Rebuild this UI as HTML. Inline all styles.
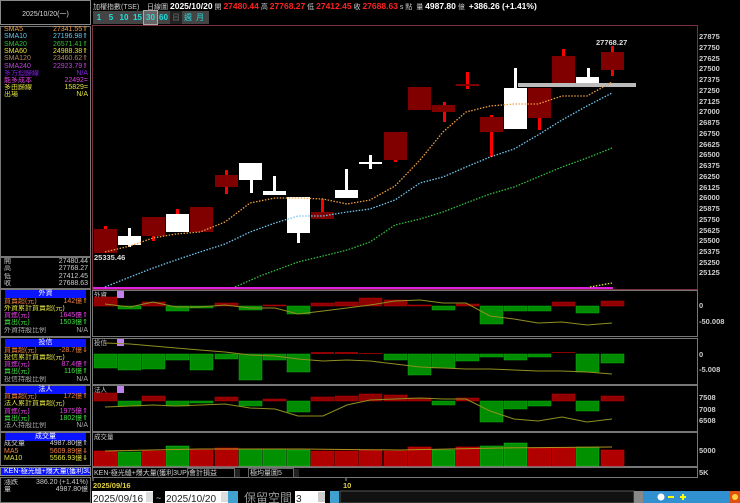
<!DOCTYPE html>
<html><head><meta charset="utf-8"><style>
*{margin:0;padding:0;box-sizing:border-box}
body{width:740px;height:503px;background:#000;overflow:hidden;position:relative;font-family:"Liberation Sans","Noto Sans CJK TC",sans-serif;}
.a{position:absolute}
.lp{position:absolute;left:0;width:91px;border:1px solid #777;}
.r{position:absolute;left:4px;width:84px;height:8px;font-size:7px;line-height:8px;white-space:nowrap;overflow:hidden}
.r b{float:right;font-weight:normal}
.hd{position:absolute;left:5px;width:81px;height:8px;background:#0a14ff;color:#fff;font-size:7px;line-height:8px;text-align:center}
</style></head><body>
<div class="lp" style="top:0;height:25px;border-color:#888"></div>
<div class="a" style="left:0;top:9px;width:91px;text-align:center;color:#ddd;font-size:7px">2025/10/20(一)</div>
<div class="lp" style="top:26px;height:231px"></div>
<div class="r" style="top:26px;color:#f0a040">SMA5<b>27341.55⇑</b></div>
<div class="r" style="top:33px;color:#60c8f0">SMA10<b>27196.98⇑</b></div>
<div class="r" style="top:41px;color:#30c030">SMA20<b>26571.41⇑</b></div>
<div class="r" style="top:48px;color:#e8e040">SMA60<b>24988.38⇑</b></div>
<div class="r" style="top:55px;color:#b08860">SMA120<b>23460.62⇑</b></div>
<div class="r" style="top:63px;color:#c040e0">SMA240<b>22923.79⇑</b></div>
<div class="r" style="top:70px;color:#8020e0">多方迴歸線<b>N/A</b></div>
<div class="r" style="top:77px;color:#e040e0">能多成本<b>22492=</b></div>
<div class="r" style="top:84px;color:#e0e040">多由歸線<b>15829=</b></div>
<div class="r" style="top:91px;color:#e0e040">出場<b>N/A</b></div>
<div class="lp" style="top:257px;height:32px"></div>
<div class="r" style="top:258px;color:#ccc">開<b>27480.44</b></div>
<div class="r" style="top:265px;color:#ccc">高<b>27768.27</b></div>
<div class="r" style="top:273px;color:#ccc">低<b>27412.45</b></div>
<div class="r" style="top:280px;color:#ccc">收<b>27688.63</b></div>
<div class="lp" style="top:289px;height:48px"></div>
<div class="hd" style="top:290px">外資</div>
<div class="r" style="top:298px;color:#f08040">買賣超(元)<b>142億⇑</b></div>
<div class="r" style="top:305px;color:#e0e040">外資累計買賣超(元)<b>14143億⇑</b></div>
<div class="r" style="top:312px;color:#e040e0">買進(元)<b>1645億⇑</b></div>
<div class="r" style="top:319px;color:#40e040">賣出(元)<b>1503億⇑</b></div>
<div class="r" style="top:327px;color:#aaa">外資持股比例<b>N/A</b></div>
<div class="lp" style="top:337px;height:48px"></div>
<div class="hd" style="top:339px">投信</div>
<div class="r" style="top:347px;color:#f08040">買賣超(元)<b>-28.7億⇓</b></div>
<div class="r" style="top:354px;color:#e0e040">投信累計買賣超(元)<b>12550億⇑</b></div>
<div class="r" style="top:361px;color:#e040e0">買進(元)<b>87.4億⇑</b></div>
<div class="r" style="top:368px;color:#40e040">賣出(元)<b>116億⇑</b></div>
<div class="r" style="top:376px;color:#aaa">投信持股比例<b>N/A</b></div>
<div class="lp" style="top:385px;height:47px"></div>
<div class="hd" style="top:386px">法人</div>
<div class="r" style="top:393px;color:#f08040">買賣超(元)<b>172億⇑</b></div>
<div class="r" style="top:400px;color:#e0e040">法人累計買賣超(元)<b>6538億⇑</b></div>
<div class="r" style="top:408px;color:#e040e0">買進(元)<b>1975億⇑</b></div>
<div class="r" style="top:415px;color:#40e040">賣出(元)<b>1802億⇑</b></div>
<div class="r" style="top:422px;color:#aaa">法人持股比例<b>N/A</b></div>
<div class="lp" style="top:432px;height:34px"></div>
<div class="hd" style="top:433px">成交量</div>
<div class="r" style="top:440px;color:#ccc">成交量<b>4987.80億⇑</b></div>
<div class="r" style="top:448px;color:#f08040">MA5<b>5609.89億⇓</b></div>
<div class="r" style="top:455px;color:#e0e040">MA10<b>5566.93億⇓</b></div>
<div class="a" style="left:0;top:467px;width:91px;height:9px;background:#0a14ff;border:1px solid #888;color:#fff;font-size:7px;line-height:8px;padding-left:3px;white-space:nowrap;overflow:hidden">KEN-極光縫+爆大量(獲利3UP)</div>
<div class="lp" style="top:477px;height:26px"></div>
<div class="r" style="top:479px;color:#ccc">漲跌<b>386.20 (+1.41%)</b></div>
<div class="r" style="top:486px;color:#ccc">量<b>4987.80億</b></div>

<div class="a" style="left:93px;top:1px;font-size:7px;color:#ccc;white-space:nowrap">加權指數(TSE)&nbsp;&nbsp;&nbsp;&nbsp;日線圖 <span style="font-size:8.5px;font-weight:bold;color:#fff">2025/10/20</span> 開 <b style="color:#f22;font-size:8.5px">27480.44</b> 高 <b style="color:#f22;font-size:8.5px">27768.27</b> 低 <b style="color:#f22;font-size:8.5px">27412.45</b> 收 <b style="color:#f22;font-size:8.5px">27688.63</b> s 點 &nbsp;量 <b style="color:#fff;font-size:8.5px">4987.80</b> 億 &nbsp;<b style="color:#fff;font-size:8.5px">+386.26 (+1.41%)</b></div>
<div class="a" style="left:93px;top:11px;width:116px;height:13px;background:#444"></div>
<div class="a" style="left:93px;top:11px;font-size:8px;font-weight:bold;color:#2dd;line-height:13px;white-space:nowrap">
<span style="display:inline-block;width:12px;text-align:center">1</span><span style="display:inline-block;width:12px;text-align:center">5</span><span style="display:inline-block;width:14px;text-align:center">10</span><span style="display:inline-block;width:13px;text-align:center">15</span><span style="display:inline-block;width:13px;text-align:center;background:#666;outline:1px solid #aaa">30</span><span style="display:inline-block;width:13px;text-align:center">60</span><span style="display:inline-block;width:12px;text-align:center;background:#222;color:#555">日</span><span style="display:inline-block;width:12px;text-align:center;font-weight:normal">週</span><span style="display:inline-block;width:12px;text-align:center;font-weight:normal">月</span></div>

<svg class="a" style="left:0;top:0" width="740" height="503">
<g fill="none">
<rect x="92.5" y="25.5" width="605" height="264" stroke="#7a3040"/>
<rect x="92.5" y="290.5" width="605" height="46" stroke="#777"/>
<rect x="92.5" y="338.5" width="605" height="46" stroke="#777"/>
<rect x="92.5" y="385.5" width="605" height="46" stroke="#777"/>
<rect x="92.5" y="432.5" width="605" height="34" stroke="#777"/>
<rect x="92.5" y="467.5" width="605" height="10" stroke="#777"/>
</g>
<line x1="93" y1="288" x2="613" y2="288" stroke="#e020e0" stroke-width="2"/>
<g fill="#ff0000">
<rect x="104" y="226" width="3" height="4"/><rect x="176" y="209" width="3" height="6"/>
<rect x="152" y="235" width="3" height="6"/><rect x="225" y="170" width="3" height="24"/>
<rect x="321" y="199" width="3" height="14"/><rect x="394" y="160" width="3" height="2"/>
<rect x="443" y="102" width="3" height="20"/><rect x="466" y="72" width="3" height="17"/>
<rect x="490" y="115" width="3" height="42"/><rect x="538" y="110" width="3" height="20"/>
<rect x="562" y="49" width="3" height="8"/><rect x="611" y="46" width="3" height="30"/>
</g>
<g fill="#fff">
<rect x="128" y="228" width="3" height="19"/><rect x="250" y="175" width="3" height="18"/>
<rect x="273" y="176" width="3" height="19"/><rect x="297" y="225" width="3" height="18"/>
<rect x="345" y="169" width="3" height="22"/><rect x="369" y="155" width="3" height="14"/>
<rect x="514" y="68" width="3" height="22"/><rect x="587" y="68" width="3" height="10"/>
<rect x="118" y="236" width="23" height="9"/><rect x="166" y="214" width="23" height="18"/>
<rect x="239" y="163" width="23" height="17"/><rect x="263" y="191" width="23" height="4"/>
<rect x="287" y="197" width="23" height="36"/><rect x="335" y="190" width="23" height="8"/>
<rect x="359" y="162" width="23" height="2"/><rect x="504" y="88" width="23" height="41"/>
<rect x="576" y="77" width="23" height="9"/>
</g>
<g fill="#800000">
<rect x="94" y="229" width="23" height="24"/><rect x="142" y="217" width="23" height="19"/>
<rect x="190" y="207" width="23" height="25"/><rect x="215" y="175" width="23" height="12"/>
<rect x="311" y="212" width="23" height="7"/><rect x="384" y="132" width="23" height="28"/>
<rect x="408" y="87" width="23" height="23"/><rect x="432" y="105" width="23" height="7"/>
<rect x="456" y="84" width="23" height="2"/><rect x="480" y="117" width="23" height="15"/>
<rect x="528" y="88" width="23" height="30"/><rect x="552" y="56" width="23" height="27"/>
<rect x="601" y="52" width="23" height="18"/>
</g>
<rect x="518" y="83" width="118" height="4" fill="#bbb"/>
<g fill="none" stroke-width="1.3" stroke-dasharray="1.5 1.5">
<polyline stroke="#f0a040" points="105,252 130,246 153,238 176,234 200,232 225,222 250,203 275,198 298,198 323,199 347,204 370,200 395,186 420,160 443,132 466,112 490,106 514,104 538,104 562,96 587,96 612,82"/>
<polyline stroke="#70c8f0" points="105,287 130,277 153,268 176,260 200,252 225,244 250,232 275,223 298,216 323,216 347,212 370,209 395,200 420,183 443,177 466,167 490,157 514,149 538,135 562,120 587,106 612,93"/>
<polyline stroke="#30c040" points="235,287 260,276 298,262 323,256 347,250 370,242 395,225 420,219 443,212 466,203 490,194 514,187 538,177 562,167 587,158 612,148"/>
<polyline stroke="#e0e040" points="590,287 612,283"/>
</g>
<g font-size="7.5" font-family="Liberation Sans" font-weight="bold" fill="#ddd">
<text x="596" y="45">27768.27</text><text x="94" y="260">25335.46</text>
</g>
<g font-size="7.5" font-family="Liberation Sans" font-weight="bold" fill="#ccc">
<text x="699" y="39">27875</text><text x="699" y="50">27750</text><text x="699" y="61">27625</text><text x="699" y="71">27500</text><text x="699" y="82">27375</text><text x="699" y="93">27250</text><text x="699" y="104">27125</text><text x="699" y="114">27000</text><text x="699" y="125">26875</text><text x="699" y="136">26750</text><text x="699" y="147">26625</text><text x="699" y="157">26500</text><text x="699" y="168">26375</text><text x="699" y="179">26250</text><text x="699" y="190">26125</text><text x="699" y="200">26000</text><text x="699" y="211">25875</text><text x="699" y="222">25750</text><text x="699" y="233">25625</text><text x="699" y="243">25500</text><text x="699" y="254">25375</text><text x="699" y="265">25250</text><text x="699" y="275">25125</text>
<text x="699" y="308">0</text><text x="699" y="324">-50.008</text>
<text x="699" y="357">0</text><text x="699" y="372">-5.008</text>
<text x="699" y="400">7508</text><text x="699" y="412">7008</text><text x="699" y="423">6508</text>
<text x="699" y="453">5000</text><text x="699" y="475">5K</text>
</g>
<g font-size="6.5" fill="#ccc"><text x="94" y="297">外資</text><text x="94" y="345">投信</text><text x="94" y="392">法人</text><text x="94" y="439">成交量</text></g>
<g fill="#c080f0"><rect x="117" y="291" width="7" height="7"/><rect x="117" y="339" width="7" height="7"/><rect x="117" y="386" width="7" height="7"/></g>
<g fill="#900000" stroke="#c00000" stroke-width=".5">
<rect x="94" y="297" width="23" height="9"/><rect x="142" y="302" width="23" height="4"/><rect x="215" y="303" width="23" height="3"/><rect x="263" y="305" width="23" height="1"/><rect x="311" y="303" width="23" height="3"/><rect x="335" y="302" width="23" height="4"/><rect x="359" y="298" width="23" height="8"/><rect x="384" y="300" width="23" height="6"/><rect x="408" y="305" width="23" height="1"/><rect x="456" y="304" width="23" height="2"/><rect x="552" y="302" width="23" height="4"/><rect x="601" y="301" width="23" height="5"/>
</g>
<g fill="#008c00" stroke="#10b010" stroke-width=".5">
<rect x="118" y="306" width="23" height="3"/><rect x="166" y="306" width="23" height="5"/><rect x="190" y="306" width="23" height="2"/><rect x="239" y="306" width="23" height="4"/><rect x="287" y="306" width="23" height="8"/><rect x="432" y="306" width="23" height="4"/><rect x="480" y="306" width="23" height="18"/><rect x="504" y="306" width="23" height="5"/><rect x="528" y="306" width="23" height="5"/><rect x="576" y="306" width="23" height="7"/>
</g>
<polyline fill="none" stroke="#909020" points="105,304 130,307 153,302 176,307 200,307 225,305 250,308 275,308 298,314 323,311 347,308 370,305 395,301 420,300 443,303 466,303 490,316 514,319 538,323 562,322 587,325 612,323"/>
<g fill="#008c00" stroke="#10b010" stroke-width=".5">
<rect x="94" y="354" width="23" height="14"/><rect x="118" y="354" width="23" height="16"/><rect x="142" y="354" width="23" height="15"/><rect x="166" y="354" width="23" height="6"/><rect x="190" y="354" width="23" height="16"/><rect x="215" y="354" width="23" height="5"/><rect x="239" y="354" width="23" height="26"/><rect x="263" y="354" width="23" height="6"/><rect x="287" y="354" width="23" height="18"/><rect x="384" y="354" width="23" height="6"/><rect x="408" y="354" width="23" height="21"/><rect x="432" y="354" width="23" height="14"/><rect x="456" y="354" width="23" height="7"/><rect x="480" y="354" width="23" height="3"/><rect x="504" y="354" width="23" height="6"/><rect x="528" y="354" width="23" height="3"/><rect x="576" y="354" width="23" height="18"/><rect x="601" y="354" width="23" height="9"/>
</g>
<g fill="#900000"><rect x="311" y="352" width="23" height="2"/><rect x="335" y="352" width="23" height="2"/><rect x="359" y="353" width="23" height="1"/><rect x="552" y="352" width="23" height="1"/></g>
<polyline fill="none" stroke="#909020" points="105,343 130,344 153,346 176,348 200,350 225,352 250,355 275,356 298,359 323,361 347,360 370,361 395,364 420,367 443,368 466,369 490,369 514,370 538,371 562,371 587,372 612,374"/>
<g fill="#900000" stroke="#c00000" stroke-width=".5">
<rect x="94" y="393" width="23" height="8"/><rect x="142" y="396" width="23" height="5"/><rect x="215" y="397" width="23" height="4"/><rect x="263" y="399" width="23" height="2"/><rect x="311" y="397" width="23" height="4"/><rect x="335" y="396" width="23" height="5"/><rect x="359" y="394" width="23" height="7"/><rect x="384" y="395" width="23" height="6"/><rect x="408" y="398" width="23" height="3"/><rect x="456" y="398" width="23" height="3"/><rect x="552" y="394" width="23" height="7"/><rect x="601" y="396" width="23" height="5"/>
</g>
<g fill="#008c00" stroke="#10b010" stroke-width=".5">
<rect x="118" y="401" width="23" height="5"/><rect x="166" y="401" width="23" height="5"/><rect x="190" y="401" width="23" height="2"/><rect x="239" y="401" width="23" height="5"/><rect x="287" y="401" width="23" height="11"/><rect x="432" y="401" width="23" height="4"/><rect x="480" y="401" width="23" height="21"/><rect x="504" y="401" width="23" height="8"/><rect x="528" y="401" width="23" height="5"/><rect x="576" y="401" width="23" height="10"/>
</g>
<polyline fill="none" stroke="#909020" points="105,407 130,406 153,405 176,406 200,405 225,404 250,408 275,409 298,416 323,416 347,405 370,400 395,399 420,398 443,399 466,399 490,411 514,419 538,421 562,417 587,422 612,419"/>
<g fill="#b00000" stroke="#e00000" stroke-width=".5">
<rect x="94" y="451" width="23" height="15"/><rect x="142" y="451" width="23" height="15"/><rect x="190" y="450" width="23" height="16"/><rect x="215" y="448" width="23" height="18"/><rect x="311" y="451" width="23" height="15"/><rect x="335" y="451" width="23" height="15"/><rect x="359" y="450" width="23" height="16"/><rect x="384" y="451" width="23" height="15"/><rect x="408" y="447" width="23" height="19"/><rect x="456" y="447" width="23" height="19"/><rect x="528" y="448" width="23" height="18"/><rect x="552" y="448" width="23" height="18"/><rect x="601" y="450" width="23" height="16"/>
</g>
<g fill="#009000" stroke="#20c020" stroke-width=".5">
<rect x="118" y="452" width="23" height="14"/><rect x="166" y="446" width="23" height="20"/><rect x="239" y="449" width="23" height="17"/><rect x="263" y="449" width="23" height="17"/><rect x="287" y="450" width="23" height="16"/><rect x="432" y="450" width="23" height="16"/><rect x="480" y="446" width="23" height="20"/><rect x="504" y="443" width="23" height="23"/><rect x="576" y="447" width="23" height="19"/>
</g>
<polyline fill="none" stroke="#b09020" points="105,451 200,449 300,449 400,450 500,448 612,447"/>
<g font-size="7" fill="#ccc"><text x="94" y="475">KEN-極光縫+爆大量(獲利3UP)</text></g>
<rect x="187.5" y="468.5" width="47" height="9" fill="none" stroke="#666"/><rect x="235" y="469" width="5" height="8" fill="#222"/>
<rect x="248.5" y="468.5" width="45" height="9" fill="none" stroke="#666"/><rect x="294" y="469" width="5" height="8" fill="#222"/>
<text x="189" y="475" font-size="7" fill="#ccc">會計損益</text><text x="250" y="475" font-size="7" fill="#ccc">極均量圖5</text>
<line x1="93" y1="478" x2="93" y2="481" stroke="#aa8"/><line x1="346" y1="478" x2="346" y2="481" stroke="#aa8"/>
<text x="93" y="488" font-size="7.5" font-weight="bold" fill="#e0d040">2025/09/16</text><text x="343" y="488" font-size="7.5" font-weight="bold" fill="#e0d040">10</text>
<rect x="92" y="491" width="61" height="12" fill="#fff"/><rect x="146" y="492" width="7" height="10" fill="#ddd"/>
<rect x="165" y="491" width="63" height="12" fill="#fff"/><rect x="221" y="492" width="7" height="10" fill="#ddd"/>
<rect x="228" y="491" width="10" height="12" fill="#40a0d0"/><rect x="330" y="491" width="9" height="12" fill="#40a0d0"/>
<rect x="295" y="491" width="30" height="12" fill="#fff"/><rect x="318" y="492" width="7" height="10" fill="#ccc"/>
<rect x="340" y="491" width="294" height="12" fill="#111" stroke="#555"/>
<g font-size="10" fill="#222"><text x="93" y="502">2025/09/16</text><text x="166" y="502">2025/10/20</text><text x="296" y="502">3</text></g>
<text x="156" y="501" font-size="9" fill="#ccc">~</text>
<text x="244" y="502" font-size="12" fill="#999">保留空間</text>
<rect x="634" y="491" width="9" height="12" fill="#888"/>
<rect x="643" y="491" width="97" height="12" fill="#3090d0"/>
<circle cx="661" cy="497" r="3.5" fill="#fff"/><rect x="668" y="496" width="6" height="2" fill="#ff0"/><rect x="680" y="496" width="6" height="2" fill="#ff0"/><rect x="682" y="494" width="2" height="6" fill="#ff0"/>
<rect x="730" y="491" width="10" height="12" fill="#e05010"/><circle cx="735" cy="497" r="3" fill="#ffd040"/>
</svg>
</body></html>
